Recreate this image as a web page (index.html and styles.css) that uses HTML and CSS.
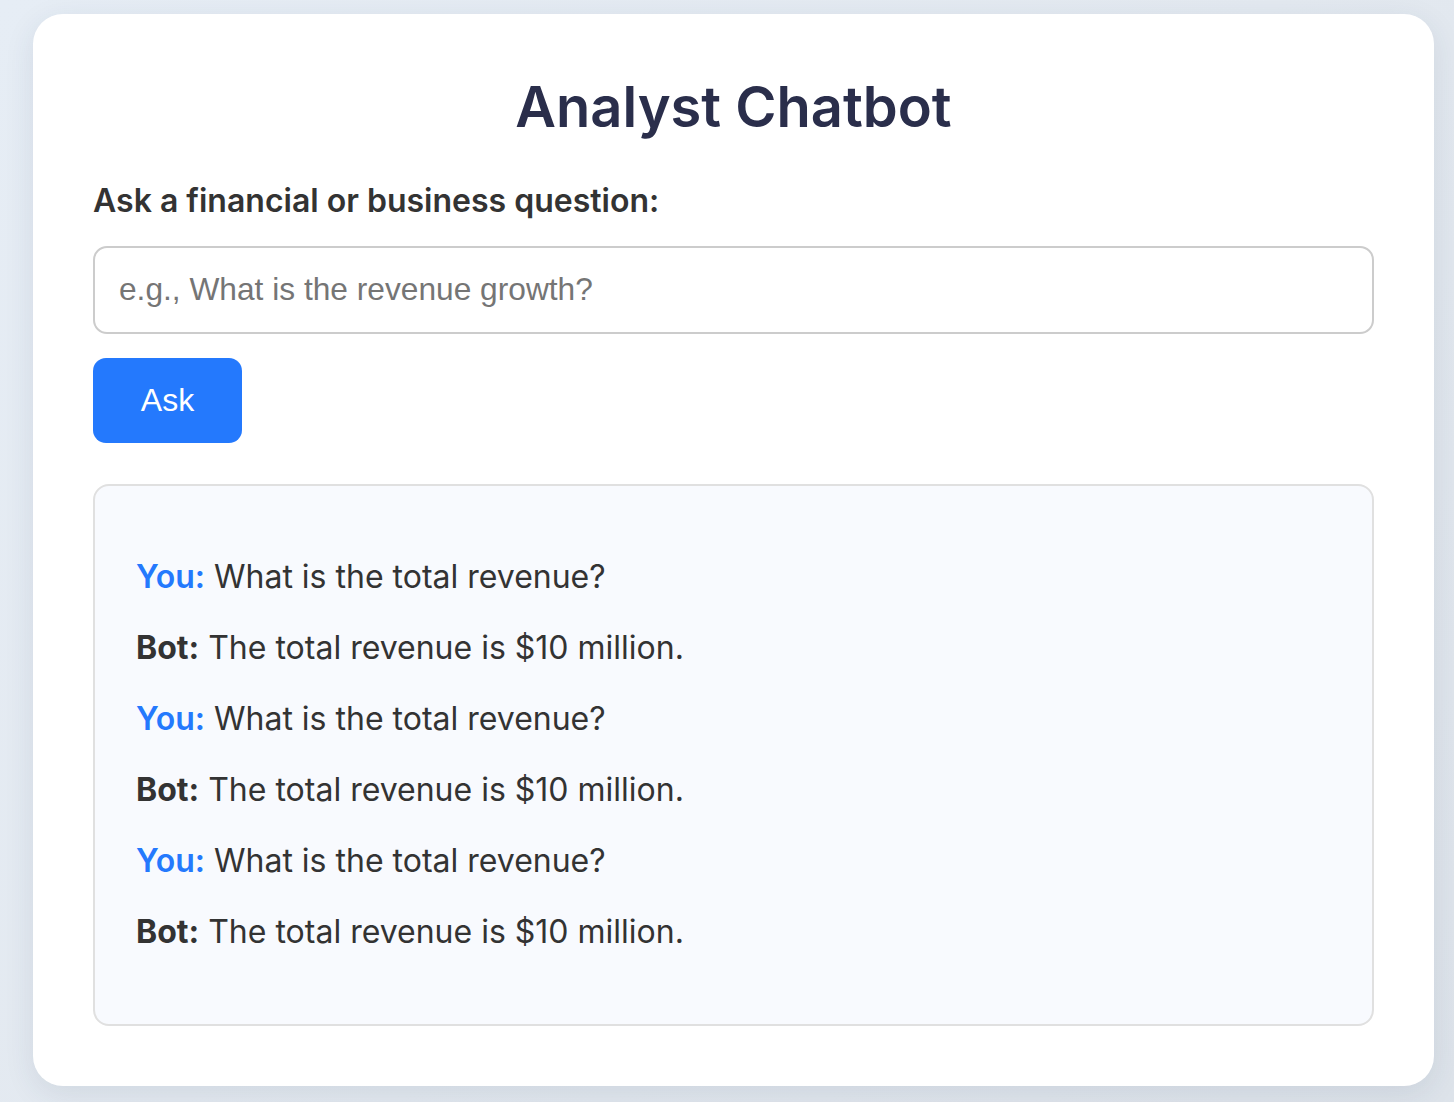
FILE: index.html
```html
<!DOCTYPE html>
<html lang="en">
<head>
<meta charset="utf-8">
<title>Analyst Chatbot</title>
<link rel="stylesheet" href="styles.css">
</head>
<body>
<main class="card">
  <h1 class="title">Analyst Chatbot</h1>
  <label class="label" for="q">Ask a financial or business question:</label>
  <input id="q" class="input" type="text" placeholder="e.g., What is the revenue growth?">
  <button class="btn" type="button">Ask</button>
  <section class="chat">
    <p class="msg"><span class="you">You:</span> What is the total revenue?</p>
    <p class="msg"><span class="bot">Bot:</span> The total revenue is $10 million.</p>
    <p class="msg"><span class="you">You:</span> What is the total revenue?</p>
    <p class="msg"><span class="bot">Bot:</span> The total revenue is $10 million.</p>
    <p class="msg"><span class="you">You:</span> What is the total revenue?</p>
    <p class="msg"><span class="bot">Bot:</span> The total revenue is $10 million.</p>
  </section>
</main>
</body>
</html>
```

FILE: styles.css
```css
html, body {
  margin: 0;
  height: 100%;
}
body {
  background: linear-gradient(135deg, #e6edf5 0%, #e3e9f0 50%, #dde3ea 100%);
  font-family: Inter, "Noto Sans", sans-serif;
  overflow: hidden;
}
.card {
  box-sizing: border-box;
  margin: 14px 20px 0 33px;
  width: 1401px;
  height: 1072px;
  background: #ffffff;
  border-radius: 30px;
  box-shadow: 0 8px 30px rgba(40, 60, 90, 0.10);
  padding: 60px 60px 60px;
  display: flex;
  flex-direction: column;
}
.title {
  margin: 0 0 41px;
  text-align: center;
  font-size: 56px;
  font-weight: 600;
  color: #2a2e4b;
  line-height: 1.2;
}
.label {
  font-size: 32px;
  font-weight: 600;
  color: #333333;
  line-height: 1.2;
  margin-bottom: 25px;
}
.input {
  box-sizing: border-box;
  width: 100%;
  height: 88px;
  flex-shrink: 0;
  border: 2px solid #cccccc;
  border-radius: 14px;
  padding: 0 24px;
  font-family: "Liberation Sans", Arial, sans-serif;
  font-size: 31.7px;
  color: #333;
  outline: none;
  margin-bottom: 24px;
}
.input::placeholder {
  color: #757575;
}
.btn {
  align-self: flex-start;
  flex-shrink: 0;
  width: 149px;
  height: 85px;
  border: none;
  border-radius: 13px;
  background: #2479fd;
  color: #ffffff;
  font-family: "Liberation Sans", Arial, sans-serif;
  font-size: 32px;
  margin-bottom: 41px;
  cursor: pointer;
}
.chat {
  box-sizing: border-box;
  height: 542px;
  flex-shrink: 0;
  background: #f8fafe;
  border: 2px solid #e0e0e0;
  border-radius: 16px;
  padding: 72px 41px 40px;
}
.msg {
  margin: 0 0 33px;
  font-size: 32px;
  line-height: 38px;
  color: #333333;
}
.you {
  color: #2479fd;
  font-weight: 600;
}
.bot {
  font-weight: 700;
}
```
